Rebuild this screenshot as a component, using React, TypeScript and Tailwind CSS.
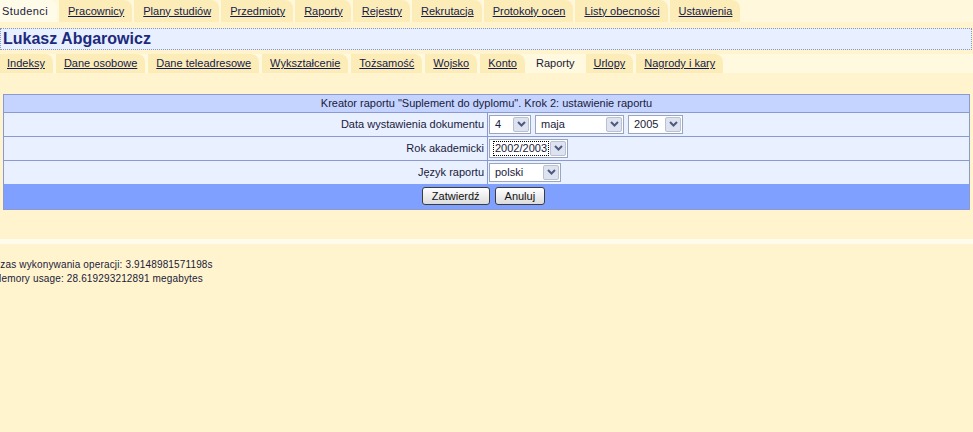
import React from "react";

const topTabs = [
  "Studenci",
  "Pracownicy",
  "Plany studiów",
  "Przedmioty",
  "Raporty",
  "Rejestry",
  "Rekrutacja",
  "Protokoły ocen",
  "Listy obecności",
  "Ustawienia",
];

const subTabs = [
  "Indeksy",
  "Dane osobowe",
  "Dane teleadresowe",
  "Wykształcenie",
  "Tożsamość",
  "Wojsko",
  "Konto",
  "Raporty",
  "Urlopy",
  "Nagrody i kary",
];

function Chevron() {
  return (
    <svg width="9" height="6" viewBox="0 0 9 6" fill="none">
      <path d="M1 1l3.5 3.5L8 1" stroke="#4b5b84" strokeWidth="2" />
    </svg>
  );
}

function FakeSelect({ value, width, focus }: { value: string; width: string; focus?: boolean }) {
  return (
    <div className={`flex h-[19px] items-center border border-[#9aa6bf] bg-white ${width}`}>
      <div className="flex flex-1 items-center pl-[3px]">
        <span
          className={
            focus
              ? "border border-dotted border-black bg-white px-[1px] leading-[13px]"
              : "px-[2px]"
          }
        >
          {value}
        </span>
      </div>
      <div className="mr-[1px] flex h-[15px] w-[16px] items-center justify-center rounded-[2px] border border-[#b9c1d6] bg-[#dfe3ef]">
        <Chevron />
      </div>
    </div>
  );
}

function Btn({ label }: { label: string }) {
  return (
    <button className="h-[18px] rounded-[3px] border border-[#3c3c3c] bg-gradient-to-b from-white to-[#dcdcdc] px-[9px] text-[11px] leading-none text-[#111]">
      {label}
    </button>
  );
}

export default function App() {
  return (
    <div className="min-h-screen bg-[#fff4ce] font-['Liberation_Sans',Arial,sans-serif] text-[11px] text-[#1a1a3a]">
      {/* top menu */}
      <div className="flex h-[22px] items-stretch gap-[2px] bg-[#fff8dd]">
        {topTabs.map((t, i) =>
          i === 0 ? (
            <div key={t} className="flex items-center rounded-tr-[8px] bg-[#fffbe9] pl-[2px] pr-[9px] tracking-[0.4px]">
              {t}
            </div>
          ) : (
            <div
              key={t}
              className="flex items-center rounded-tr-[8px] bg-[#fcecb8] pl-[9px] pr-[8px] text-[#141a4a] underline"
            >
              {t}
            </div>
          )
        )}
      </div>

      {/* student name */}
      <div className="mt-[6px] mr-[1px] flex h-[22px] items-center border border-dotted border-[#8c98b4] bg-[#e8efff] pl-[2px]">
        <span className="text-[16px] font-bold text-[#1b2a7c]">Lukasz Abgarowicz</span>
      </div>

      {/* sub menu */}
      <div className="mt-[4px] flex h-[19px] items-stretch gap-[3px] bg-[#fff9df]">
        {subTabs.map((t, i) =>
          t === "Raporty" ? (
            <div key={t} className="flex items-center px-[8px]">
              {t}
            </div>
          ) : (
            <div
              key={t}
              className={`flex items-center rounded-tr-[8px] bg-[#fcecb8] ${i === 0 ? "pl-[7px] pr-[8px]" : "px-[8px]"} text-[#141a4a] underline`}
            >
              {t}
            </div>
          )
        )}
      </div>

      {/* report form */}
      <div className="px-[3px] pt-[21px]">
        <table className="w-full border-collapse border border-[#8a9ad0]">
          <tbody>
            <tr className="h-[17px] bg-[#c4d4ff]">
              <td colSpan={2} className="border-b border-[#8a9ad0] text-center">
                Kreator raportu "Suplement do dyplomu". Krok 2: ustawienie raportu
              </td>
            </tr>
            <tr className="h-[24px] bg-[#e9f0ff]">
              <td className="w-[484px] border-b border-r border-[#8a9ad0] pr-[3px] text-right">
                Data wystawienia dokumentu
              </td>
              <td className="border-b border-[#8a9ad0] pl-[1px]">
                <div className="flex gap-[4px]">
                  <FakeSelect value="4" width="w-[42px]" />
                  <FakeSelect value="maja" width="w-[89px]" />
                  <FakeSelect value="2005" width="w-[55px]" />
                </div>
              </td>
            </tr>
            <tr className="h-[24px] bg-[#e9f0ff]">
              <td className="border-b border-r border-[#8a9ad0] pr-[3px] text-right">Rok akademicki</td>
              <td className="border-b border-[#8a9ad0] pl-[1px]">
                <FakeSelect value="2002/2003" width="w-[79px]" focus />
              </td>
            </tr>
            <tr className="h-[24px] bg-[#e9f0ff]">
              <td className="border-r border-[#8a9ad0] pr-[3px] text-right">Język raportu</td>
              <td className="pl-[1px]">
                <FakeSelect value="polski" width="w-[72px]" />
              </td>
            </tr>
            <tr className="h-[25px] bg-[#80a0ff]">
              <td colSpan={2}>
                <div className="flex justify-center gap-[5px] pr-[6px]">
                  <Btn label="Zatwierdź" />
                  <Btn label="Anuluj" />
                </div>
              </td>
            </tr>
          </tbody>
        </table>
      </div>

      {/* footer */}
      <div className="mt-[29px] h-[5px] bg-[#fffcee]" />
      <div className="-ml-[7px] pt-[14px] text-[10px] leading-[14px] tracking-[0.15px]">
        <div>Czas wykonywania operacji: 3.9148981571198s</div>
        <div>Memory usage: 28.619293212891 megabytes</div>
      </div>
    </div>
  );
}
